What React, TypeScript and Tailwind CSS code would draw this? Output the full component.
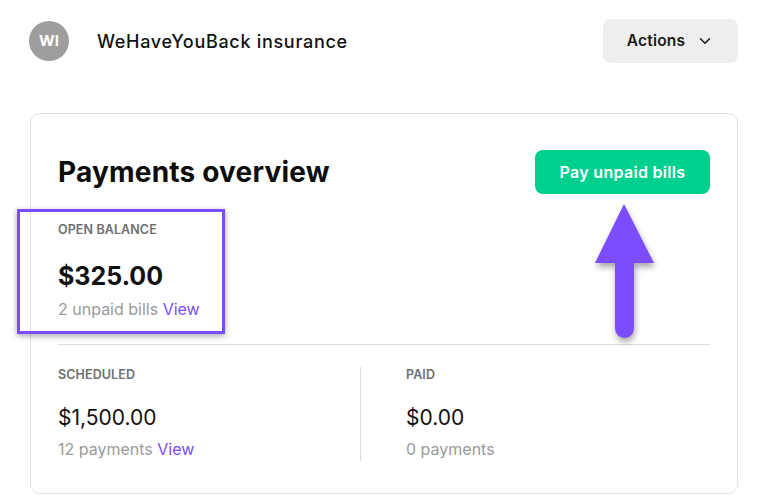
import { ChevronDown } from 'lucide-react';

const font = { fontFamily: 'Inter, "Noto Sans", sans-serif' };

function Stat({ label, amount, sub, link, big }: { label: string; amount: string; sub: string; link?: boolean; big?: boolean }) {
  return (
    <div>
      <div className="text-[12.5px] font-semibold uppercase leading-[16px] tracking-[0.1px] text-[#6f6f6f]">{label}</div>
      <div className={big ? 'mt-[21px] text-[25px] font-bold leading-[34px] text-[#111]' : 'mt-[20px] text-[21px] font-normal leading-[30px] text-[#111]'}>
        {amount}
      </div>
      <div className="mt-[6px] text-[16px] leading-[20px] text-[#9a9a9a]">
        {sub}
        {link && <span className="text-[#7c4dff]"> View</span>}
      </div>
    </div>
  );
}

export default function App() {
  return (
    <div className="min-h-[504px] bg-white pl-[29px] pr-[25px] pt-[19px]" style={font}>
      {/* Header */}
      <div className="flex items-center justify-between">
        <div className="flex items-center gap-[28px]">
          <div className="flex h-[40px] w-[40px] items-center justify-center rounded-full bg-[#9e9e9e] text-[15px] font-bold text-white">
            WI
          </div>
          <div className="text-[18px] font-medium tracking-[0.7px] text-[#111]">WeHaveYouBack insurance</div>
        </div>
        <button className="flex h-[44px] w-[135px] items-center justify-center gap-[11px] rounded-[8px] bg-[#eeeeee] text-[15.5px] font-semibold tracking-[0.2px] text-[#1a1a1a]">
          Actions
          <ChevronDown className="h-[18px] w-[18px]" strokeWidth={2} />
        </button>
      </div>

      {/* Card */}
      <div className="relative ml-px mt-[50px] rounded-[10px] border border-[#e3e3e3] px-[27px] pb-[32px] pt-[36px]">
        <div className="flex items-center justify-between">
          <h1 className="text-[28px] font-bold leading-[36px] tracking-[0.2px] text-[#0d0d0d]">Payments overview</h1>
          <button className="h-[44px] w-[175px] rounded-[8px] bg-[#00d08f] text-[16px] font-semibold tracking-[0.3px] text-white">
            Pay unpaid bills
          </button>
        </div>

        <div className="mt-[28px] pb-[25px]">
          <Stat label="Open balance" amount="$325.00" sub="2 unpaid bills" link big />
        </div>

        <div className="flex border-t border-[#dcdcdc] pt-[22px]">
          <div className="w-[303px] border-r border-[#dcdcdc] pb-[2px]">
            <Stat label="Scheduled" amount="$1,500.00" sub="12 payments" link />
          </div>
          <div className="pl-[45px]">
            <Stat label="Paid" amount="$0.00" sub="0 payments" />
          </div>
        </div>

        {/* Annotation: highlight box */}
        <div className="absolute left-[-14px] top-[95px] h-[125px] w-[208px] border-[3px] border-[#7c4dff] shadow-[0_2px_6px_rgba(0,0,0,0.35)]" />

        {/* Annotation: arrow */}
        <svg className="absolute left-[560px] top-[85px]" width="70" height="147" viewBox="0 0 70 147" style={{ filter: 'drop-shadow(1px 4px 3px rgba(0,0,0,0.35))' }}>
          <path d="M33 5 L63 64 L43 64 L43 129.5 A9.5 9.5 0 0 1 24 129.5 L24 64 L4 64 Z" fill="#7c4dff" />
        </svg>
      </div>
    </div>
  );
}
